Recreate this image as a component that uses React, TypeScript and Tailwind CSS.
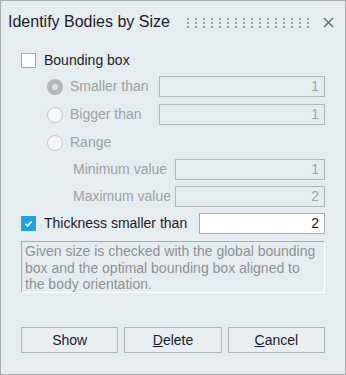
import React from 'react';

const FONT = { fontFamily: '"Liberation Sans", Arial, sans-serif' };

function Dots() {
  const cols = Array.from({ length: 16 }, (_, i) => i);
  const rows = [0, 4, 8];
  return (
    <svg width="122" height="10" viewBox="0 0 122 10">
      {rows.map((y) =>
        cols.map((c) => <rect key={`${y}-${c}`} x={c * 8} y={y} width="2" height="2" fill="#999da1" />)
      )}
    </svg>
  );
}

function Radio({ checked }: { checked?: boolean }) {
  return checked ? (
    <div className="w-[16px] h-[16px] rounded-full bg-[#b3b7bb] flex items-center justify-center">
      <div className="w-[6px] h-[6px] rounded-full bg-[#dfe4e8]" />
    </div>
  ) : (
    <div className="w-[16px] h-[16px] rounded-full border border-[#c4c8cc] bg-[#f4f6f8]" />
  );
}

function NumBox({ value, width, enabled }: { value: string; width: string; enabled?: boolean }) {
  return (
    <div
      className={`${width} h-[21px] border flex items-center justify-end pr-[5px] text-[14px] ${
        enabled ? 'bg-white border-[#a9acaf] text-[#1a1a1a]' : 'border-[#b4b7ba] text-[#a3a3a3]'
      }`}
    >
      {value}
    </div>
  );
}

export default function App() {
  return (
    <div className="w-[346px] h-[375px] border border-[#a8acb0] bg-[#e6edf1] flex flex-col" style={FONT}>
      <div className="h-[42px] flex items-center pl-[7px] pr-[11px]">
        <span className="text-[16px] text-[#1b1b2a]">Identify Bodies by Size</span>
        <div className="ml-auto flex items-center">
          <div className="mt-[2px]">
            <Dots />
          </div>
          <svg width="11" height="11" viewBox="0 0 11 11" className="ml-[14px]">
            <path d="M1 1L10 10M10 1L1 10" stroke="#6b6e72" strokeWidth="1.5" />
          </svg>
        </div>
      </div>

      <div className="flex flex-col px-[20px]">
        <div className="mt-[7px] h-[20px] flex items-center">
          <div className="w-[15px] h-[15px] border border-[#a2a5a8] bg-white" />
          <span className="ml-[8px] text-[14px] text-[#1b1b2a]">Bounding box</span>
        </div>

        <div className="mt-[6px] h-[21px] flex items-center pl-[26px]">
          <Radio checked />
          <span className="ml-[7px] text-[14px] text-[#a0a0a0]">Smaller than</span>
          <div className="ml-auto">
            <NumBox value="1" width="w-[166px]" />
          </div>
        </div>

        <div className="mt-[7px] h-[21px] flex items-center pl-[26px]">
          <Radio />
          <span className="ml-[7px] text-[14px] text-[#a0a0a0]">Bigger than</span>
          <div className="ml-auto">
            <NumBox value="1" width="w-[166px]" />
          </div>
        </div>

        <div className="mt-[7px] h-[21px] flex items-center pl-[26px]">
          <Radio />
          <span className="ml-[7px] text-[14px] text-[#a0a0a0]">Range</span>
        </div>

        <div className="mt-[6px] h-[21px] flex items-center pl-[52px]">
          <span className="text-[14px] text-[#a0a0a0]">Minimum value</span>
          <div className="ml-auto">
            <NumBox value="1" width="w-[150px]" />
          </div>
        </div>

        <div className="mt-[6px] h-[21px] flex items-center pl-[52px]">
          <span className="text-[14px] text-[#a0a0a0]">Maximum value</span>
          <div className="ml-auto">
            <NumBox value="2" width="w-[150px]" />
          </div>
        </div>

        <div className="mt-[6px] h-[21px] flex items-center">
          <div className="w-[15px] h-[15px] bg-[#1ea2e0] flex items-center justify-center">
            <svg width="11" height="11" viewBox="0 0 11 11">
              <path d="M2.5 5.8L4.6 7.8L8.6 3.4" stroke="white" strokeWidth="1.6" fill="none" />
            </svg>
          </div>
          <span className="ml-[8px] text-[14px] text-[#1b1b2a]">Thickness smaller than</span>
          <div className="ml-auto">
            <NumBox value="2" width="w-[126px]" enabled />
          </div>
        </div>

        <div className="mt-[7px] h-[52px] border border-t-[#a9acaf] border-l-[#a9acaf] border-r-white border-b-white px-[3px] pt-[1px] text-[14px] leading-[16.7px] text-[#8f9194]">
          Given size is checked with the global bounding box and the optimal bounding box aligned to the body orientation.
        </div>

        <div className="mt-[34px] grid grid-cols-3 gap-[6px]">
          <button className="h-[26px] border border-[#b2b5b8] bg-[#e8eef2] text-[14px] text-[#1b1b2a]">Show</button>
          <button className="h-[26px] border border-[#b2b5b8] bg-[#e8eef2] text-[14px] text-[#1b1b2a]">
            <span className="underline">D</span>elete
          </button>
          <button className="h-[26px] border border-[#b2b5b8] bg-[#e8eef2] text-[14px] text-[#1b1b2a]">
            <span className="underline">C</span>ancel
          </button>
        </div>
      </div>
    </div>
  );
}
